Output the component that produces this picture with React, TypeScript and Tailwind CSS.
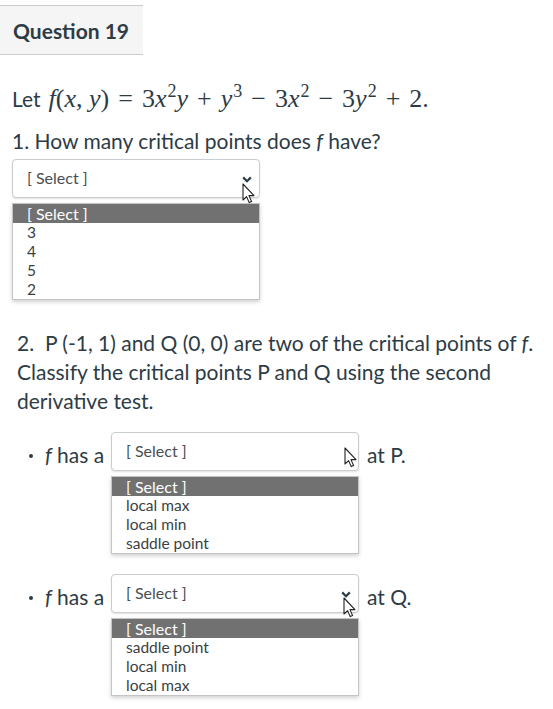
import React from "react";

const Cursor = ({ className }: { className: string }) => (
  <svg className={`absolute ${className}`} width="13" height="21" viewBox="0 0 13 21">
    <path d="M1 1 L1 17 L4.6 13.6 L7.2 19.6 L9.6 18.6 L7 12.6 L12 12.6 Z" fill="#fff" stroke="#222" strokeWidth="1.1" strokeLinejoin="round" />
  </svg>
);

const Chevron = ({ className }: { className: string }) => (
  <svg className={`absolute ${className}`} width="10" height="7" viewBox="0 0 10 7">
    <path d="M1.2 1.4 L5 5.2 L8.8 1.4" fill="none" stroke="#2d3b45" strokeWidth="2.2" />
  </svg>
);

function SelectBox({ chevron, cursor }: { chevron: boolean; cursor: string }) {
  return (
    <div className="relative flex h-[39px] w-[248px] items-center rounded-[4px] border border-[#c7cdd1] bg-white pb-[2px] pl-[14px] text-[16px] leading-[20px] text-[#4a4f53] shadow-[0_1px_2px_rgba(0,0,0,0.12)]">
      [ Select ]
      {chevron && <Chevron className="right-[7px] top-[16px]" />}
      <Cursor className={cursor} />
    </div>
  );
}

function OptionList({ options }: { options: string[] }) {
  return (
    <div className="mt-[5px] w-[248px] border border-[#c4c4c4] bg-white text-[15.5px] leading-[19px] text-[#3a3f44] shadow-[0_2px_4px_rgba(0,0,0,0.18)]">
      <div className="h-[19px] bg-[#717171] pl-[14px] text-[16px] text-white">[ Select ]</div>
      {options.map((o) => (
        <div key={o} className="h-[19px] pl-[14px]">{o}</div>
      ))}
    </div>
  );
}

const V = ({ children }: { children: React.ReactNode }) => <i className="font-['Liberation_Serif',serif]">{children}</i>;
const Sup = ({ children }: { children: React.ReactNode }) => <span className="relative top-[-10px] ml-[1px] text-[18px]">{children}</span>;
const Op = ({ children }: { children: React.ReactNode }) => <span className="mx-[9px]">{children}</span>;

function Formula() {
  return (
    <span className="font-['Liberation_Serif',serif] text-[26px] leading-none">
      <V>f</V>(<V>x</V>,&nbsp;<V>y</V>)<Op>=</Op>3<V>x</V><Sup>2</Sup><V>y</V><Op>+</Op><V>y</V><Sup>3</Sup><Op>−</Op>3<V>x</V><Sup>2</Sup><Op>−</Op>3<V>y</V><Sup>2</Sup><Op>+</Op>2.
    </span>
  );
}

function BulletRow({ point, options, chevron, cursor }: { point: string; options: string[]; chevron: boolean; cursor: string }) {
  return (
    <div className="flex items-start">
      <div className="flex h-[39px] w-[111px] shrink-0 items-center pt-[5px] pl-[29px]">
        <span className="mr-[12px] mt-[4px] size-[4px] rounded-full bg-[#2d3b45]" />
        <span><i>f</i> has a</span>
      </div>
      <div>
        <SelectBox chevron={chevron} cursor={cursor} />
        <OptionList options={options} />
      </div>
      <div className="flex h-[39px] items-center pt-[5px] pl-[8px]">at {point}.</div>
    </div>
  );
}

export default function App() {
  return (
    <main className="min-h-screen bg-white pt-[5px] font-['Lato','Noto_Sans',sans-serif] text-[21px] leading-[27px] text-[#2d3b45]">
      <div className="flex h-[50px] w-[143px] items-center border-y border-[#c7cdd1] bg-[#f5f5f5] pl-[13px] text-[21px] font-bold">
        Question 19
      </div>

      <section className="px-[12px]">
        <p className="mt-[30px]">
          <span className="mr-[8px]">Let</span>
          <Formula />
        </p>

        <p className="mt-[15px]">1. How many critical points does <i>f</i> have?</p>
        <div className="mt-[5px]">
          <SelectBox chevron cursor="left-[229px] top-[23px]" />
          <OptionList options={["3", "4", "5", "2"]} />
        </div>

        <div className="mt-[28px] pl-[5px] leading-[29px]">
          <p>2. &nbsp;P (-1, 1) and Q (0, 0) are two of the critical points of <i>f</i>.</p>
          <p>Classify the critical points P and Q using the second</p>
          <p>derivative test.</p>
        </div>
      </section>

      <div className="mt-[17px]">
        <BulletRow point="P" options={["local max", "local min", "saddle point"]} chevron={false} cursor="left-[232px] top-[14px]" />
      </div>
      <div className="mt-[20px]">
        <BulletRow point="Q" options={["saddle point", "local min", "local max"]} chevron cursor="left-[231px] top-[22px]" />
      </div>
    </main>
  );
}
